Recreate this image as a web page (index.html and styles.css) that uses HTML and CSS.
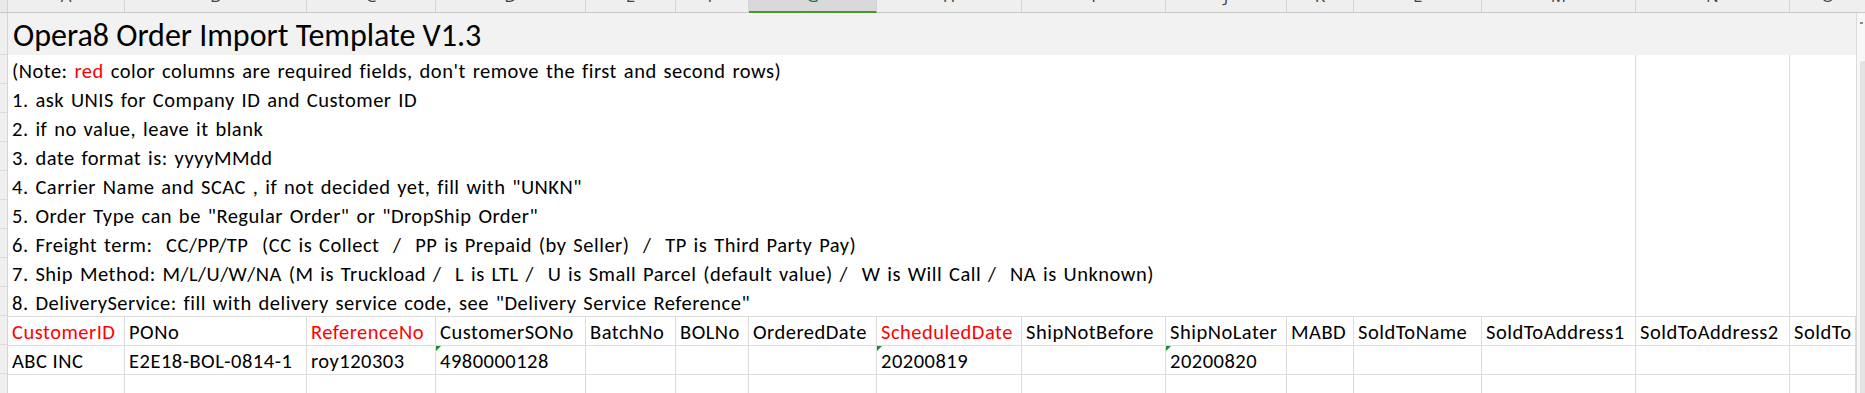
FILE: index.html
```html
<!DOCTYPE html>
<html>
<head>
    <meta http-equiv="Content-Type" content="text/html; charset=utf-8" />
    <title>Opera8 Order Import Template</title>
    <link rel="stylesheet" href="styles.css">
</head>

<body>
<div class="sheet">
    <!-- column letters -->
    <div class="corner"></div>
    <div class="col">A</div>
    <div class="col">B</div>
    <div class="col">C</div>
    <div class="col">D</div>
    <div class="col">E</div>
    <div class="col">F</div>
    <div class="col active">G</div>
    <div class="col">H</div>
    <div class="col">I</div>
    <div class="col">J</div>
    <div class="col">K</div>
    <div class="col">L</div>
    <div class="col">M</div>
    <div class="col">N</div>
    <div class="col last">O</div>

    <!-- row 1 -->
    <div class="rh r2"></div>
    <div class="title">Opera8 Order Import Template V1.3</div>
    <div class="vscroll">
        <div class="arrow"><span></span></div>
        <div class="thumb"></div>
    </div>

    <!-- notes, rows 2-10 -->
    <div class="rh r3"></div>
    <div class="rh r4"></div>
    <div class="rh r5"></div>
    <div class="rh r6"></div>
    <div class="rh r7"></div>
    <div class="rh r8"></div>
    <div class="rh r9"></div>
    <div class="rh r10"></div>
    <div class="rh r11"></div>
    <div class="notes">
        <div class="line">(Note: <span class="req">red</span> color columns are required fields, don't remove the first and second rows)</div>
        <div class="line">1. ask UNIS for Company ID and Customer ID</div>
        <div class="line">2. if no value, leave it blank</div>
        <div class="line">3. date format is: yyyyMMdd</div>
        <div class="line">4. Carrier Name and SCAC , if not decided yet, fill with "UNKN"</div>
        <div class="line">5. Order Type can be "Regular Order" or "DropShip Order"</div>
        <div class="line">6. Freight term:  CC/PP/TP  (CC is Collect  /  PP is Prepaid (by Seller)  /  TP is Third Party Pay)</div>
        <div class="line">7. Ship Method: M/L/U/W/NA (M is Truckload /  L is LTL /  U is Small Parcel (default value) /  W is Will Call /  NA is Unknown)</div>
        <div class="line">8. DeliveryService: fill with delivery service code, see "Delivery Service Reference"</div>
    </div>
    <div class="blank m"></div>
    <div class="blank n"></div>
    <div class="blank o"></div>

    <!-- field names -->
    <div class="rh"></div>
    <div class="cell req">CustomerID</div>
    <div class="cell">PONo</div>
    <div class="cell req">ReferenceNo</div>
    <div class="cell">CustomerSONo</div>
    <div class="cell">BatchNo</div>
    <div class="cell">BOLNo</div>
    <div class="cell">OrderedDate</div>
    <div class="cell req">ScheduledDate</div>
    <div class="cell">ShipNotBefore</div>
    <div class="cell">ShipNoLater</div>
    <div class="cell">MABD</div>
    <div class="cell">SoldToName</div>
    <div class="cell">SoldToAddress1</div>
    <div class="cell">SoldToAddress2</div>
    <div class="cell">SoldTo</div>

    <!-- sample order -->
    <div class="rh"></div>
    <div class="cell">ABC INC</div>
    <div class="cell">E2E18-BOL-0814-1</div>
    <div class="cell">roy120303</div>
    <div class="cell txt">4980000128</div>
    <div class="cell"></div>
    <div class="cell"></div>
    <div class="cell"></div>
    <div class="cell txt">20200819</div>
    <div class="cell"></div>
    <div class="cell txt">20200820</div>
    <div class="cell"></div>
    <div class="cell"></div>
    <div class="cell"></div>
    <div class="cell"></div>
    <div class="cell"></div>

    <!-- empty row -->
    <div class="rh"></div>
    <div class="cell"></div>
    <div class="cell"></div>
    <div class="cell"></div>
    <div class="cell"></div>
    <div class="cell"></div>
    <div class="cell"></div>
    <div class="cell"></div>
    <div class="cell"></div>
    <div class="cell"></div>
    <div class="cell"></div>
    <div class="cell"></div>
    <div class="cell"></div>
    <div class="cell"></div>
    <div class="cell"></div>
    <div class="cell"></div>
</div>
</body>
</html>
```

FILE: styles.css
```css
* {
    box-sizing: border-box;
}

body {
    margin: 0;
    background: #fff;
    font-family: Calibri, Carlito, Lato, sans-serif;
    color: #000;
}

.sheet {
    width: 1865px;
    height: 393px;
    overflow: hidden;
    display: grid;
    grid-template-columns: 8px 117px 182px 129px 150px 90px 73px 128px 145px 144px 121px 67px 128px 154px 154px 66px 9px;
    grid-template-rows: 13px 42px repeat(9, 29px) 29px 29px 29px;
}

/* column letters */
.corner {
    background: #e9e9e9;
    border-right: 1px solid #d4d4d4;
    border-bottom: 1px solid #c8c8c8;
}

.col {
    background: #efefef;
    border-right: 1px solid #d4d4d4;
    border-bottom: 1px solid #c8c8c8;
    overflow: hidden;
    text-align: center;
    font-family: "Open Sans", sans-serif;
    font-size: 17px;
    color: #444;
    line-height: 1;
}

.col::before {
    content: "";
    display: block;
    margin-top: -13px;
}

.col.last {
    grid-column: span 2;
    border-right: none;
}

.col.active {
    background: #d9d9d9;
    color: #217346;
    border-bottom: 2px solid #46982f;
}

/* row number strip */
.rh {
    grid-column: 1;
    background: #efefef;
    border-right: 1px solid #d4d4d4;
    border-bottom: 1px solid #dcdcdc;
}

.r2 { grid-row: 2; }
.r3 { grid-row: 3; }
.r4 { grid-row: 4; }
.r5 { grid-row: 5; }
.r6 { grid-row: 6; }
.r7 { grid-row: 7; }
.r8 { grid-row: 8; }
.r9 { grid-row: 9; }
.r10 { grid-row: 10; }
.r11 { grid-row: 11; }

.title {
    grid-column: 2 / 17;
    grid-row: 2;
    background: #f2f2f2;
    font-size: 32px;
    line-height: 1.2;
    padding-left: 5px;
    display: flex;
    align-items: flex-end;
    white-space: nowrap;
}

.vscroll {
    grid-column: 17;
    grid-row: 2 / 15;
    background: #f7f7f7;
    border-left: 1px solid #dadada;
    display: flex;
    flex-direction: column;
}

.vscroll .arrow {
    height: 48px;
    padding: 9px 0 0 3px;
}

.vscroll .arrow span {
    display: block;
    width: 3px;
    height: 2px;
    background: #8a8a8a;
}

.vscroll .thumb {
    flex: 1;
    margin-left: 3px;
    background: #e3e3e3;
    border-radius: 3px 0 0 0;
}

.notes {
    grid-column: 2 / 14;
    grid-row: 3 / 12;
    display: flex;
    flex-direction: column;
}

.notes .line {
    height: 29px;
    padding-left: 4px;
    font-size: 20.5px;
    letter-spacing: 0.5px;
    word-spacing: 1.7px;
    line-height: 1.2;
    white-space: pre;
    display: flex;
    align-items: flex-end;
}

.blank {
    grid-row: 3 / 12;
    border-right: 1px solid #dcdcdc;
}

.blank.m { grid-column: 14; }
.blank.n { grid-column: 15; }
.blank.o { grid-column: 16; border-right: none; }

.cell {
    position: relative;
    border-top: 1px solid #dcdcdc;
    border-right: 1px solid #dcdcdc;
    padding-left: 4px;
    font-size: 20.5px;
    letter-spacing: 0.5px;
    line-height: 1.2;
    white-space: nowrap;
    overflow: hidden;
    display: flex;
    align-items: flex-end;
}

.req {
    color: #ff0000;
}

/* number stored as text marker */
.txt::before {
    content: "";
    position: absolute;
    top: 0;
    left: 0;
    border-top: 5px solid #1c8a2e;
    border-right: 5px solid transparent;
}
```
